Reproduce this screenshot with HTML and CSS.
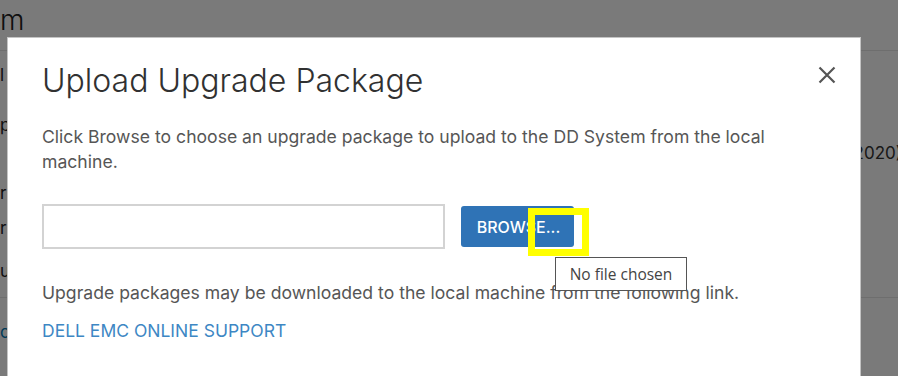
FILE: index.html
```html
<!DOCTYPE html>
<html lang="en">
<head>
    <meta charset="UTF-8">
    <title>Upload Upgrade Package</title>
    <link rel="stylesheet" href="styles.css">
</head>
<body>
    <div class="page">
        <div class="page-header">
            <h2 class="page-title">m</h2>
        </div>
        <div class="page-rows">
            <div class="row">l</div>
            <div class="row">p</div>
            <div class="row">r <span class="row-end">2020)</span></div>
            <div class="row">r</div>
            <div class="row">u</div>
        </div>
        <div class="page-footer">
            <span class="link-frag">c</span>
        </div>
    </div>

    <div class="backdrop"></div>

    <div class="modal">
        <div class="modal-header">
            <h1 class="modal-title">Upload Upgrade Package</h1>
            <button class="close" aria-label="Close">
                <svg width="18" height="18" viewBox="0 0 18 18">
                    <path d="M1.5 1.5 L16.5 16.5 M16.5 1.5 L1.5 16.5" stroke="#555" stroke-width="2.2" fill="none"/>
                </svg>
            </button>
        </div>
        <p class="intro">Click Browse to choose an upgrade package to upload to the DD System from the local machine.</p>
        <div class="upload-row">
            <div class="file-name"></div>
            <button class="browse">BROWSE...</button>
        </div>
        <p class="note">Upgrade packages may be downloaded to the local machine from the following link.</p>
        <a class="support-link" href="#">DELL EMC ONLINE SUPPORT</a>

        <div class="highlight"></div>
        <div class="tooltip">No file chosen</div>
    </div>
</body>
</html>
```

FILE: styles.css
```css
html, body {
    margin: 0;
    height: 100%;
    overflow: hidden;
}
body {
    font-family: Inter, "Open Sans", sans-serif;
    background: #ffffff;
    position: relative;
}

/* page behind the dialog */
.page {
    height: 100%;
    color: #222;
}
.page-header {
    height: 50px;
    border-bottom: 1px solid #e6e6e6;
}
.page-title {
    margin: 0;
    padding-top: 2px;
    font-size: 28px;
    font-weight: 300;
    line-height: 36px;
}
.page-rows {
    height: 246px;
    border-bottom: 1px solid #e6e6e6;
}
.row {
    height: 48px;
    font-size: 17px;
    line-height: 48px;
    display: flex;
    justify-content: space-between;
}
.row:nth-child(1) { height: 46px; }
.row:nth-child(2) { height: 56px; line-height: 56px; }
.row:nth-child(3) { height: 58px; line-height: 80px; }
.row:nth-child(4) { height: 34px; line-height: 34px; }
.row:nth-child(5) { height: 52px; line-height: 52px; }
.row-end {
    align-self: flex-start;
    margin-top: -9px;
    margin-right: -4px;
    line-height: 18px;
    color: #333;
}
.page-footer {
    padding-top: 24px;
    font-size: 17px;
    color: #0079b8;
}

.backdrop {
    position: absolute;
    inset: 0;
    background: rgba(0, 0, 0, 0.52);
}

/* dialog */
.modal {
    position: absolute;
    left: 7px;
    top: 37px;
    width: 854px;
    height: 360px;
    background: #fff;
    border: 1px solid #c4c4c4;
    box-sizing: border-box;
    padding: 25px 24px 0 34px;
    color: #565656;
}
.modal-header {
    display: flex;
    justify-content: space-between;
    align-items: flex-start;
}
.modal-title {
    margin: 0;
    font-size: 32px;
    font-weight: 300;
    line-height: 36px;
    color: #313131;
}
.close {
    border: none;
    background: none;
    padding: 0;
    margin-top: 3px;
    width: 18px;
    height: 18px;
}
.intro {
    margin: 25px 0 0;
    width: 740px;
    font-size: 17.6px;
    line-height: 25px;
}
.upload-row {
    display: flex;
    align-items: flex-start;
    gap: 16px;
    margin-top: 30px;
}
.file-name {
    width: 399px;
    height: 41px;
    border: 2px solid #d3d3d3;
}
.browse {
    margin-top: 2px;
    width: 113px;
    height: 41px;
    padding: 0 0 0 2px;
    border: none;
    border-radius: 3px;
    background: #2f73b6;
    color: #fff;
    font-family: Inter, sans-serif;
    font-size: 16px;
    font-weight: 500;
}
.note {
    margin: 31px 0 0;
    font-size: 17.6px;
    line-height: 25px;
}
.support-link {
    display: block;
    margin-top: 13px;
    font-size: 17.5px;
    line-height: 25px;
    color: #3d87c4;
    text-decoration: none;
}

/* annotation marks over the dialog */
.highlight {
    position: absolute;
    left: 520px;
    top: 170px;
    width: 47px;
    height: 34px;
    border: 7px solid #ffff00;
}
.tooltip {
    position: absolute;
    left: 547px;
    top: 219px;
    width: 130px;
    height: 32px;
    border: 1px solid #555;
    background: #fff;
    font-family: "Open Sans", sans-serif;
    font-size: 15.5px;
    line-height: 32px;
    text-align: center;
    color: #444;
}
```
